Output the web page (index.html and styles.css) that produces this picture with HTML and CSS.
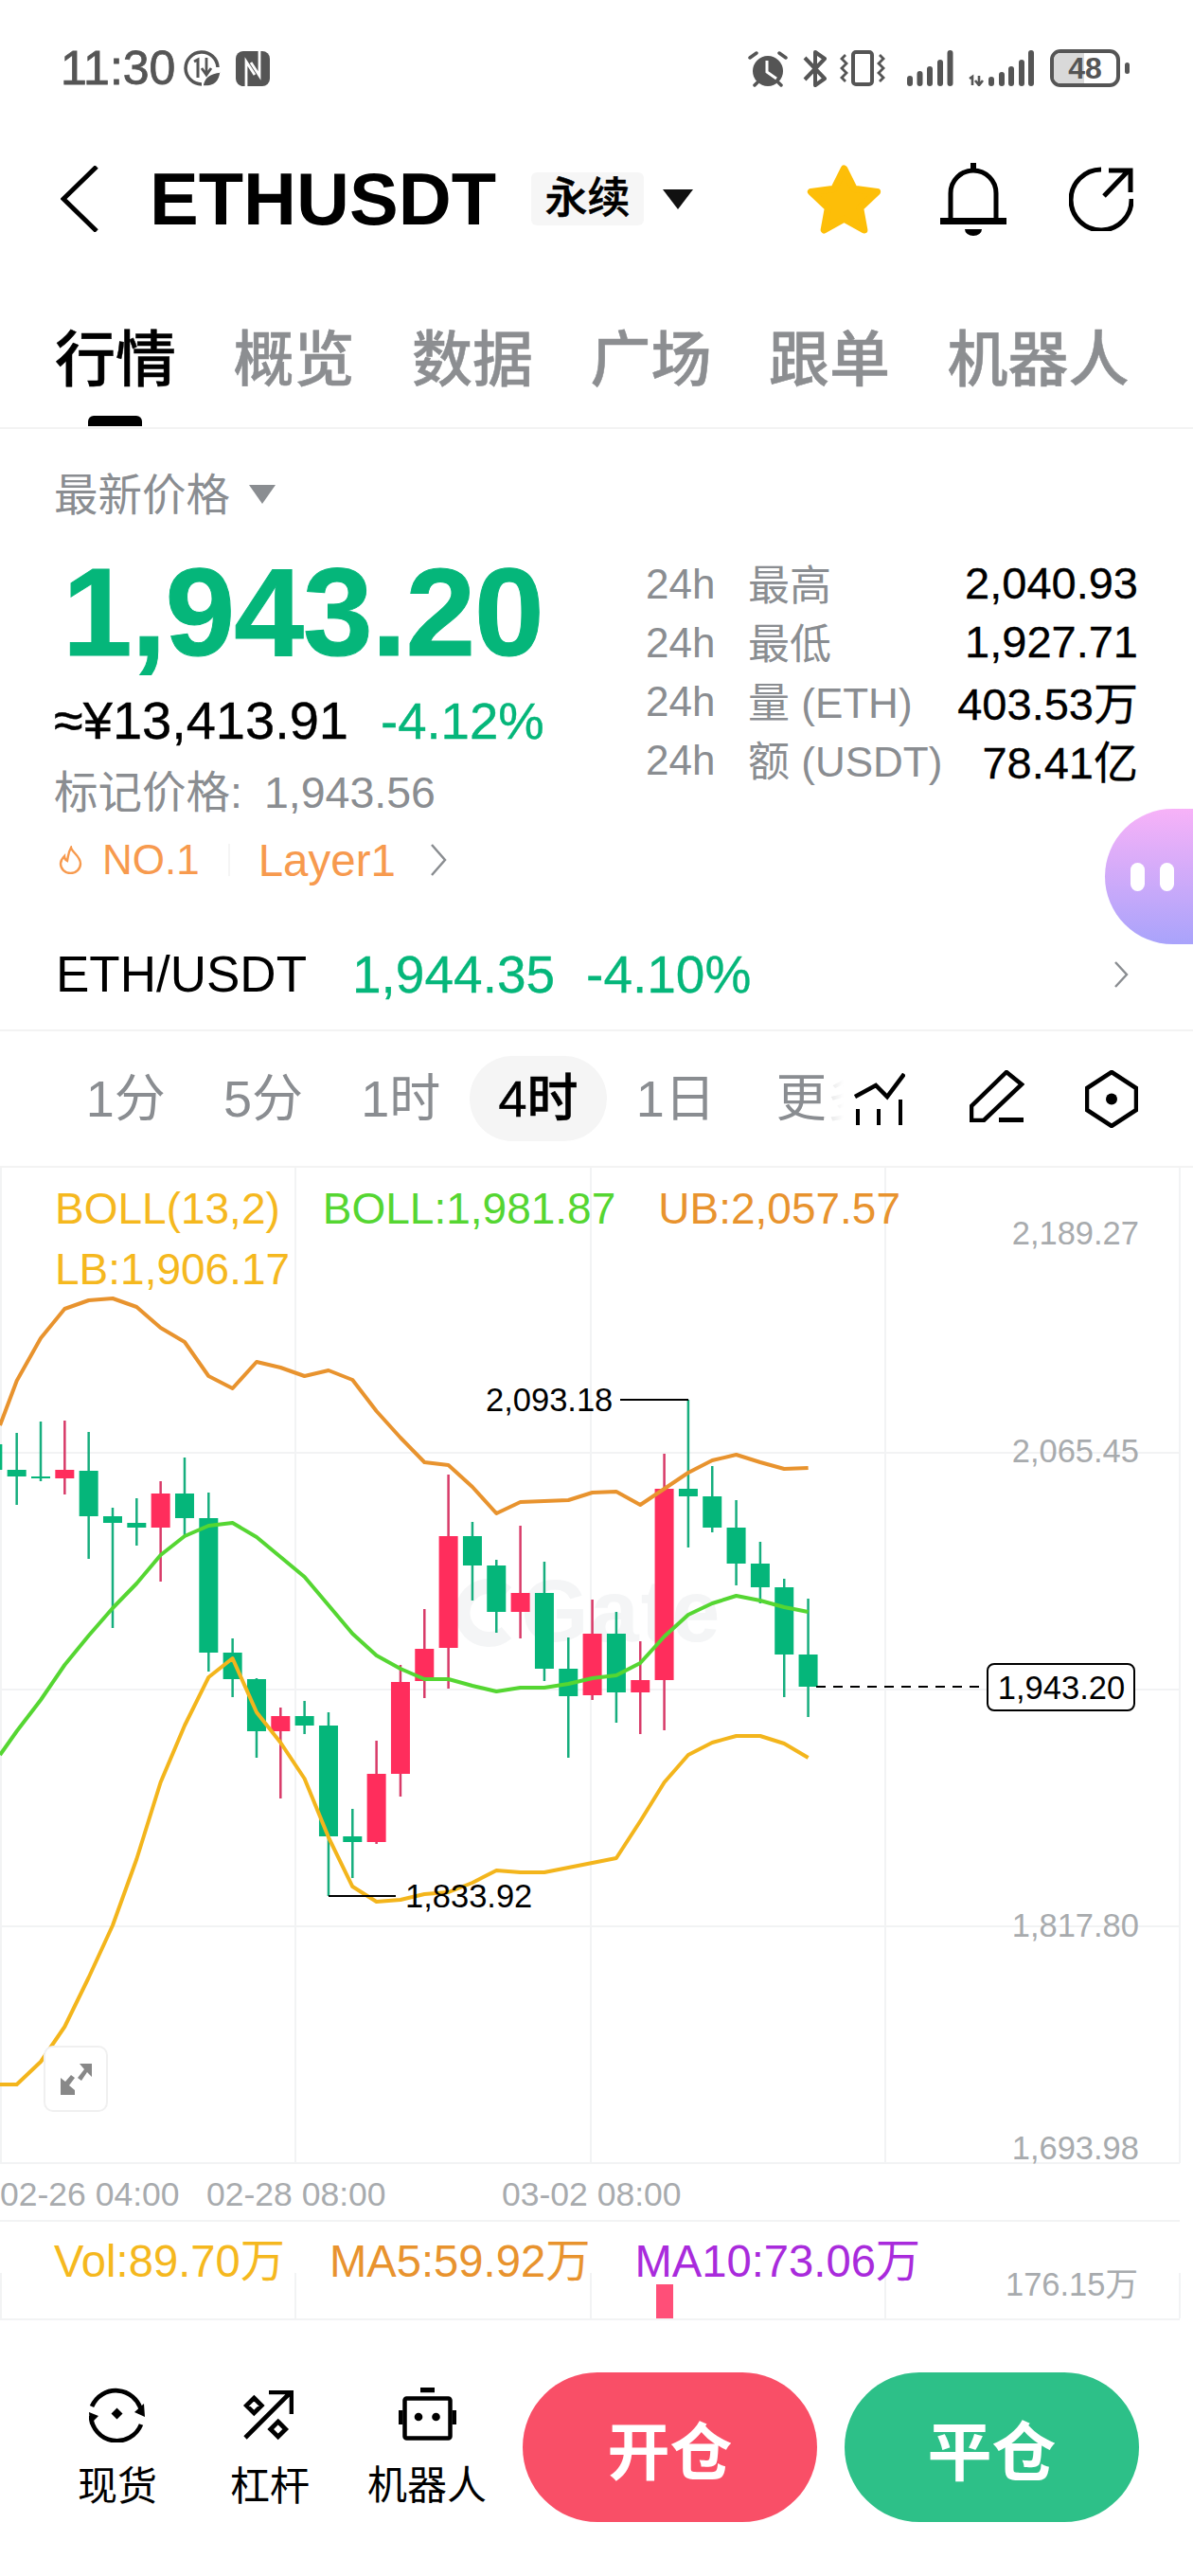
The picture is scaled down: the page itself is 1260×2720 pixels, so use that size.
FILE: index.html
```html
<!DOCTYPE html>
<html lang="zh-CN">
<head>
    <meta charset="UTF-8">
    <meta name="viewport" content="width=device-width, initial-scale=1.0">
    <title>ETHUSDT 永续</title>
    <link rel="stylesheet" href="styles.css">
</head>
<body>

    <!-- Status bar -->
    <div class="status-bar">
        <span class="clock">11:30</span>
        <svg class="st-hd" viewBox="0 0 39 39"><path d="M19 36A17 17 0 1 1 36 18" fill="none" stroke="#555" stroke-width="3.500"/><path d="M20 38c1-9 8-14 19-15-1 10-7 16-19 15z" fill="#555" stroke="#fff" stroke-width="1.500"/><path d="M11 12l4-2v19" fill="none" stroke="#555" stroke-width="3"/><path d="M24 8v17m-5-6l5 7 5-7" fill="none" stroke="#555" stroke-width="2.800"/></svg>
        <svg class="st-nfc" viewBox="0 0 36 37"><rect width="36" height="37" rx="8" fill="#555"/><path d="M11 37V11l9 14M25 0v26l-9-14" fill="none" stroke="#fff" stroke-width="2.800"/></svg>
        <div class="status-right">
            <svg class="st-alarm" viewBox="0 0 42 39"><circle cx="21" cy="22" r="16" fill="#555"/><path d="M20 11v12l10 7" fill="none" stroke="#fff" stroke-width="3"/><path d="M2 8l7-5M40 8l-7-5M7 37l3-3M35 37l-3-3" stroke="#555" stroke-width="3.500" stroke-linecap="round"/></svg>
            <svg class="st-bt" viewBox="0 0 26 39"><path d="M3 8l21 22-10 7V2l10 7L3 31" fill="none" stroke="#555" stroke-width="4" stroke-linejoin="round"/></svg>
            <svg class="st-vib" viewBox="0 0 48 38"><rect x="14" y="2" width="20" height="34" rx="3" fill="none" stroke="#555" stroke-width="4"/><path d="M6 5L2 9l5 5-5 5 5 5-5 5 4 4M42 5l4 4-5 5 5 5-5 5 5 5-4 4" fill="none" stroke="#555" stroke-width="2.800"/></svg>
            <svg class="st-sig" viewBox="0 0 49 38"><path d="M3 30v5M13.500 25v10M24 20v15M35 13v22M45.500 3v32" stroke="#555" stroke-width="6" stroke-linecap="round"/></svg>
            <svg class="st-sig2" viewBox="0 0 70 38"><path d="M1 30l3-2v9M11 27v9m-4-4l4 5 4-5" fill="none" stroke="#555" stroke-width="2.600"/><path d="M24 31v4M35 26v9M45 20v15M56 13v22M66 3v32" stroke="#555" stroke-width="6" stroke-linecap="round"/></svg>
            <div class="battery"><span class="battery-fill"></span><span class="battery-num">48</span></div>
            <span class="battery-nub"></span>
        </div>
    </div>

    <!-- Symbol header -->
    <div class="nav">
        <svg class="back" viewBox="0 0 40 70"><path d="M38 1L3 35l35 34" fill="none" stroke="#000" stroke-width="5"/></svg>
        <h1 class="symbol">ETHUSDT</h1>
        <span class="symbol-tag">永续</span>
        <span class="caret caret-dark"></span>
        <svg class="ic-star" viewBox="3 2 73 69"><path d="M39.500 6l10 20 23 3-17 16 4 22-20-11-20 11 4-22-17-16 23-3z" fill="#fdbe08" stroke="#fdbe08" stroke-width="7" stroke-linejoin="round"/></svg>
        <svg class="ic-bell" viewBox="0 0 70 77"><path d="M11 60V32a24 24 0 0 1 48 0v28" fill="none" stroke="#000" stroke-width="5"/><path d="M0 58h70v7H0zM32 0h6v9h-6zM26 70h18a9 7 0 0 1-18 0z"/></svg>
        <svg class="ic-share" viewBox="0 0 68 68"><path d="M66 34A32 32 0 1 1 34 3" fill="none" stroke="#000" stroke-width="5"/><path d="M37 31L62 5M42 4h23v23" fill="none" stroke="#000" stroke-width="5"/></svg>
    </div>

    <!-- Section tabs -->
    <div class="tabs">
        <span class="tab tab-active">行情</span>
        <span class="tab">概览</span>
        <span class="tab">数据</span>
        <span class="tab">广场</span>
        <span class="tab">跟单</span>
        <span class="tab">机器人</span>
    </div>

    <!-- Price summary -->
    <div class="quote">
        <div class="quote-main">
            <div class="muted-label">最新价格<span class="caret caret-gray"></span></div>
            <div class="last-price">1,943.20</div>
            <div class="sub-price">≈¥13,413.91<span class="change">-4.12%</span></div>
            <div class="mark-price">标记价格:<span class="mark-value">1,943.56</span></div>
            <div class="hot-row">
                <svg class="flame" viewBox="0 0 25 30"><path d="M13 2c1 5 10 9 10 17a10.500 10 0 0 1-21 0c0-4 2-6 4-8 0 3 1 4 3 5 1-5 1-9 4-14z" fill="none" stroke="#f79a4e" stroke-width="2.400"/></svg>
                <span class="hot-text">NO.1</span>
                <span class="hot-sep"></span>
                <span class="hot-layer">Layer1</span>
                <svg class="hot-more" viewBox="0 0 18 34"><path d="M2 1l14 16L2 33" fill="none" stroke="#8a8d91" stroke-width="2.500"/></svg>
            </div>
        </div>
        <div class="stats">
            <span class="stat-h">24h</span><span class="stat-name">最高</span><span class="stat-val">2,040.93</span>
            <span class="stat-h">24h</span><span class="stat-name">最低</span><span class="stat-val">1,927.71</span>
            <span class="stat-h">24h</span><span class="stat-name">量 (ETH)</span><span class="stat-val">403.53万</span>
            <span class="stat-h">24h</span><span class="stat-name">额 (USDT)</span><span class="stat-val">78.41亿</span>
        </div>
        <div class="assistant"><i></i><i></i></div>
    </div>

    <!-- Spot pair -->
    <div class="pair">
        <span class="pair-name">ETH/USDT</span>
        <span class="pair-price">1,944.35</span>
        <span class="pair-change">-4.10%</span>
        <svg class="pair-more" viewBox="0 0 16 28"><path d="M2 1l12 13L2 27" fill="none" stroke="#8a8d91" stroke-width="2.400"/></svg>
    </div>

    <!-- Interval switcher -->
    <div class="intervals">
        <div class="interval-list">
            <span class="interval">1分</span>
            <span class="interval">5分</span>
            <span class="interval">1时</span>
            <span class="interval interval-active">4时</span>
            <span class="interval">1日</span>
            <span class="interval interval-more">更多</span>
        </div>
        <svg class="ic-indicator" viewBox="0 0 54 55"><path d="M1 24l22-12 12 12L53 0" fill="none" stroke="#000" stroke-width="4.500" transform="translate(0 1)"/><path d="M4 38v17M26 38v17M49 28v27" stroke="#000" stroke-width="4"/></svg>
        <svg class="ic-pencil" viewBox="0 0 58 55"><path d="M39 2l16 13-40 38-13 0v-15z" fill="none" stroke="#000" stroke-width="4.500"/><path d="M31 50h26v5H31z"/></svg>
        <svg class="ic-hex" viewBox="0 0 56 61"><path d="M28 2l26 17v23L28 59 2 42V19z" fill="none" stroke="#000" stroke-width="4.500"/><circle cx="28" cy="30.500" r="6"/></svg>
    </div>

    <!-- Kline chart, drawn by chart.js -->
    <div class="chart">
        <svg id="kline" class="kline" viewBox="0 1233 1260 1217"></svg>
        <div class="legend legend-boll">
            <span class="c-yellow">BOLL(13,2)</span>
            <span class="c-green">BOLL:1,981.87</span>
            <span class="c-orange">UB:2,057.57</span>
            <span class="c-yellow">LB:1,906.17</span>
        </div>
        <div class="legend legend-vol">
            <span class="c-yellow">Vol:89.70万</span>
            <span class="c-orange">MA5:59.92万</span>
            <span class="c-purple">MA10:73.06万</span>
        </div>
        <div class="expand">
            <svg viewBox="0 0 33 33"><path d="M33 0v14l-5-5-6 9-4-3 7-9-5-6zM0 33V15l5 4 6-7 4 3-6 8 6 5v5z" fill="#888"/></svg>
        </div>
    </div>

    <!-- Bottom actions -->
    <div class="footer">
        <div class="tool tool-spot">
            <svg viewBox="0 0 60 60"><path d="M3 22A27.500 27.500 0 0 1 55 26M55 41A27.500 27.500 0 0 1 2 32" fill="none" stroke="#000" stroke-width="4.700"/><path d="M58 19l1 14-11-5zM0 28l10 4-9 9zM29.500 23.500l6 6-6 6-6-6z"/></svg>
            <span>现货</span>
        </div>
        <div class="tool tool-margin">
            <svg viewBox="0 0 54 54"><path d="M3 50L50 3M28 2h24v23" fill="none" stroke="#000" stroke-width="4.700"/><path d="M12.300 8l8 8-8 8-8-8zM37.700 33l8 8-8 8-8-8z" fill="none" stroke="#000" stroke-width="4.700"/></svg>
            <span>杠杆</span>
        </div>
        <div class="tool tool-bot">
            <svg viewBox="0 0 61 56"><path d="M23 0h15v5.300H23zM0 24h4.500v15H0zM56.500 24H61v15h-4.500z"/><rect x="6.500" y="11.500" width="48" height="42" rx="2" fill="none" stroke="#000" stroke-width="4.500"/><circle cx="21" cy="31" r="4.300"/><circle cx="39.500" cy="31" r="4.300"/></svg>
            <span>机器人</span>
        </div>
        <button class="trade trade-open">开仓</button>
        <button class="trade trade-close">平仓</button>
    </div>

    <script src="chart.js"></script>
</body>
</html>
```

FILE: styles.css
```css
* {
    box-sizing: border-box;
}

body {
    margin: 0;
    width: 1260px;
    height: 2720px;
    overflow: hidden;
    background: #fff;
    color: #000;
    font-family: "Liberation Sans", "Noto Sans CJK SC", sans-serif;
}

/* status bar */
.status-bar {
    display: flex;
    align-items: center;
    height: 144px;
    padding: 0 67px 0 64px;
}

.clock {
    font-size: 50px;
    font-weight: 500;
    color: #555;
    -webkit-text-stroke: 0.8px #555;
}

.st-hd { width: 39px; height: 39px; margin-left: 9px; }
.st-nfc { width: 36px; height: 37px; margin-left: 16px; }

.status-right {
    display: flex;
    align-items: center;
    margin-left: auto;
}

.st-alarm { width: 42px; height: 39px; }
.st-bt { width: 26px; height: 39px; margin-left: 15px; }
.st-vib { width: 48px; height: 38px; margin-left: 14px; }
.st-sig { width: 49px; height: 38px; margin-left: 23px; }
.st-sig2 { width: 70px; height: 38px; margin-left: 16px; }

.battery {
    position: relative;
    width: 74px;
    height: 40px;
    margin-left: 16px;
    border: 4px solid #555;
    border-radius: 11px;
    overflow: hidden;
    text-align: center;
}

.battery-fill {
    position: absolute;
    left: 0;
    top: 0;
    bottom: 0;
    width: 48%;
    background: #d9d9d9;
}

.battery-num {
    position: relative;
    display: block;
    font-size: 32px;
    font-weight: 700;
    line-height: 32px;
    color: #555;
}

.battery-nub {
    width: 5px;
    height: 12px;
    margin-left: 5px;
    border-radius: 3px;
    background: #555;
}

/* header row */
.nav {
    display: flex;
    align-items: center;
    height: 132px;
    padding-left: 64px;
}

.back { width: 40px; height: 70px; }

.symbol {
    margin: 0 0 0 54px;
    font-size: 77.500px;
    font-weight: 700;
    line-height: 90px;
}

.symbol-tag {
    width: 119px;
    height: 56px;
    margin-left: 37px;
    border-radius: 6px;
    background: #f6f6f6;
    font-size: 45px;
    font-weight: 500;
    line-height: 56px;
    text-align: center;
    -webkit-text-stroke: 0.5px #000;
}

.caret {
    display: inline-block;
    width: 0;
    height: 0;
    border-style: solid;
    border-color: transparent;
    border-bottom-width: 0;
}

.caret-dark {
    margin: 0 0 0 20px;
    border-width: 21px 16px 0;
    border-top-color: #111;
}

.ic-star { width: 79px; height: 73px; margin-left: 120px; }
.ic-bell { width: 70px; height: 77px; margin-left: 62px; }
.ic-share { width: 68px; height: 68px; margin-left: 66px; }

/* section tabs */
.tabs {
    display: flex;
    gap: 60.500px;
    height: 177px;
    padding: 68px 0 0 58px;
    border-bottom: 2px solid #f3f3f3;
}

.tab {
    position: relative;
    font-size: 64px;
    font-weight: 500;
    line-height: 72px;
    height: 72px;
    color: #8c8e91;
    -webkit-text-stroke: 0.5px #8c8e91;
}

.tab-active {
    color: #000;
    -webkit-text-stroke: 0.5px #000;
}

.tab-active::after {
    content: "";
    position: absolute;
    left: 35px;
    top: 95px;
    width: 57px;
    height: 11px;
    border-radius: 6px 6px 0 0;
    background: #000;
}

/* price block */
.quote {
    position: relative;
    display: flex;
    height: 517px;
}

.quote-main {
    width: 682px;
    padding-left: 57px;
}

.muted-label {
    display: flex;
    align-items: center;
    height: 56px;
    margin-top: 37px;
    font-size: 46.500px;
    color: #8a8d91;
}

.caret-gray {
    margin: 8px 0 0 20px;
    border-width: 20px 14px 0;
    border-top-color: #8a8d91;
}

.last-price {
    height: 140px;
    margin: 30px 0 0 9px;
    font-size: 132.500px;
    font-weight: 700;
    line-height: 140px;
    letter-spacing: -1px;
    color: #05b67a;
    -webkit-text-stroke: 1px #05b67a;
}

.sub-price {
    height: 64px;
    margin-top: 13px;
    font-size: 56px;
    line-height: 64px;
    -webkit-text-stroke: 0.4px #000;
}

.change {
    margin-left: 34px;
    font-size: 54.500px;
    color: #05b67a;
    -webkit-text-stroke: 0.4px #05b67a;
}

.mark-price {
    height: 56px;
    margin-top: 16px;
    font-size: 46.500px;
    line-height: 56px;
    color: #8a8d91;
}

.mark-value {
    margin-left: 23px;
}

.hot-row {
    display: flex;
    align-items: center;
    height: 56px;
    margin-top: 15px;
    color: #f79a4e;
    font-size: 44px;
}

.flame { width: 25px; height: 30px; margin: 0 21px 0 5px; }

.hot-sep {
    width: 2px;
    height: 34px;
    margin: 0 30px;
    background: #f5f5f5;
}

.hot-layer { font-size: 47.500px; }
.hot-more { width: 18px; height: 34px; margin-left: 36px; }

.stats {
    display: grid;
    grid-template-columns: 109px 1fr auto;
    grid-auto-rows: 62px;
    align-items: center;
    width: 520px;
    height: 248px;
    margin-top: 131px;
}

.stat-h,
.stat-name {
    font-size: 44px;
    color: #8a8d91;
}

.stat-h { padding-top: 3px; }
.stat-name { margin-left: -1px; }

.stat-val {
    font-size: 47px;
    text-align: right;
    -webkit-text-stroke: 0.3px #000;
}

.assistant {
    position: absolute;
    top: 401px;
    left: 1167px;
    display: flex;
    gap: 16px;
    align-items: center;
    width: 130px;
    height: 143px;
    padding-left: 27px;
    border-radius: 72px 0 0 72px;
    background: linear-gradient(#f7b2f8, #a9a3fb);
}

.assistant i {
    width: 15px;
    height: 30px;
    border-radius: 8px;
    background: #fff;
}

/* spot pair row */
.pair {
    display: flex;
    align-items: center;
    height: 119px;
    padding: 0 68px 0 59px;
    border-bottom: 2px solid #f3f3f3;
    font-size: 53px;
}

.pair-price {
    margin-left: 48px;
    font-size: 55px;
    color: #05b67a;
    -webkit-text-stroke: 0.3px #05b67a;
}

.pair-change {
    margin-left: 33px;
    font-size: 55px;
    color: #05b67a;
    -webkit-text-stroke: 0.3px #05b67a;
}

.pair-more { width: 16px; height: 28px; margin-left: auto; }

/* interval switcher */
.intervals {
    display: flex;
    align-items: center;
    height: 144px;
    padding-left: 60px;
    border-bottom: 2px solid #f3f3f3;
}

.interval-list {
    position: relative;
    display: flex;
    align-items: center;
    width: 840px;
    height: 90px;
    overflow: hidden;
    flex-shrink: 0;
}

.interval-list::after {
    content: "";
    position: absolute;
    right: 0;
    top: 0;
    bottom: 0;
    width: 30px;
    background: linear-gradient(to right, rgba(255, 255, 255, 0.7), #fff 70%);
}

.interval {
    flex: 0 0 145.300px;
    height: 90px;
    border-radius: 45px;
    font-size: 54px;
    line-height: 90px;
    text-align: center;
    color: #8a8d91;
}

.interval-more {
    flex: none;
    margin-left: 33px;
    white-space: nowrap;
    text-align: left;
}

.interval-active {
    background: #f5f5f5;
    color: #000;
    font-weight: 500;
    -webkit-text-stroke: 0.5px #000;
}

.ic-indicator { width: 54px; height: 55px; margin-left: 2px; }
.ic-pencil { width: 58px; height: 55px; margin-left: 68px; margin-top: -6px; }
.ic-hex { width: 56px; height: 61px; margin-left: 64px; }

/* kline chart */
.chart {
    position: relative;
    height: 1217px;
}

.kline {
    display: block;
    width: 1260px;
    height: 1217px;
}

.legend {
    position: absolute;
    display: flex;
    flex-wrap: wrap;
    line-height: 64px;
}

.legend-boll {
    left: 58px;
    top: 11px;
    width: 910px;
    column-gap: 45px;
    font-size: 46px;
}

.legend-vol {
    left: 57px;
    top: 1123px;
    column-gap: 47px;
    font-size: 47.200px;
}

.c-yellow { color: #f5b81e; }
.c-green { color: #55d632; }
.c-orange { color: #e8932e; }
.c-purple { color: #a92bdc; }

.expand {
    position: absolute;
    left: 46px;
    top: 927px;
    display: flex;
    align-items: center;
    justify-content: center;
    width: 68px;
    height: 70px;
    border: 2px solid #f0f0f0;
    border-radius: 10px;
    background: #fff;
}

.expand svg { width: 33px; height: 33px; }

.grid-line { stroke: #f2f3f4; stroke-width: 2; }
.watermark { fill: #f4f5f6; font-size: 92px; font-weight: 700; letter-spacing: 2px; }
.wick-up { stroke: #d83a68; stroke-width: 2.500; }
.wick-down { stroke: #16ae7e; stroke-width: 2.500; }
.body-up { fill: #ff2d5c; }
.body-down { fill: #05b67a; }
.band { fill: none; stroke-width: 4; stroke-linejoin: round; }
.band-ub { stroke: #e8932e; }
.band-mid { stroke: #55d632; }
.band-lb { stroke: #f3b51c; }
.axis-text { fill: #a8abae; font-size: 34.500px; }
.time-text { fill: #a8abae; font-size: 35.500px; }
.mark-text { fill: #000; font-size: 34.500px; }
.mark-line { stroke: #000; stroke-width: 2; fill: none; }
.last-line { stroke: #000; stroke-width: 2; stroke-dasharray: 10 8; }
.last-box { fill: #fff; stroke: #000; stroke-width: 2; }
.vol-bar { fill: #ff4f78; }

/* bottom actions */
.footer {
    display: flex;
    align-items: flex-start;
    padding: 55px 0 0 44px;
}

.tool {
    display: flex;
    flex-direction: column;
    align-items: center;
    height: 150px;
    font-size: 42px;
}

.tool span {
    line-height: 46px;
}

.tool-spot { width: 160px; padding-top: 14px; }
.tool-margin { width: 162px; padding-top: 19px; }
.tool-bot { width: 170px; padding-top: 16px; }
.tool-spot svg { width: 60px; height: 60px; margin-bottom: 24px; }
.tool-margin svg { width: 54px; height: 54px; margin: 0 4px 25px 0; }
.tool-bot svg { width: 61px; height: 56px; margin-bottom: 25px; }

.trade {
    width: 311px;
    height: 158px;
    border: none;
    border-radius: 79px;
    color: #fff;
    font-family: inherit;
    font-size: 66px;
    font-weight: 700;
}

.trade-open {
    margin-left: 16px;
    background: #f94f67;
}

.trade-close {
    margin-left: 29px;
    font-size: 68px;
    background: #2dc088;
}
```

FILE: chart.js
```js
const NS = 'http://www.w3.org/2000/svg';
const svg = document.getElementById('kline');

function add(tag, attrs, text) {
    const el = document.createElementNS(NS, tag);
    for (const key in attrs) el.setAttribute(key, attrs[key]);
    if (text) el.textContent = text;
    svg.appendChild(el);
    return el;
}

const STEP = 25.33;
const X0 = 17.67;
const BODY = 20;
const xAt = i => X0 + STEP * i;

// [wick top, body top, body bottom, wick bottom, up?] in chart pixels, oldest first
const candles = [
    [1500, 1525, 1552, 1590, 0],
    [1513, 1552, 1559, 1589, 0],
    [1501, 1559, 1561, 1564, 0],
    [1500, 1552, 1561, 1578, 1],
    [1512, 1553, 1601, 1646, 0],
    [1592, 1601, 1608, 1719, 0],
    [1582, 1608, 1613, 1632, 0],
    [1564, 1577, 1613, 1670, 1],
    [1539, 1577, 1603, 1622, 0],
    [1576, 1603, 1745, 1765, 0],
    [1730, 1745, 1773, 1792, 0],
    [1772, 1773, 1828, 1856, 0],
    [1803, 1812, 1828, 1899, 1],
    [1796, 1812, 1822, 1831, 0],
    [1808, 1822, 1939, 2002, 0],
    [1910, 1939, 1945, 1983, 0],
    [1838, 1873, 1945, 1947, 1],
    [1758, 1776, 1873, 1897, 1],
    [1699, 1741, 1775, 1793, 1],
    [1557, 1622, 1740, 1783, 1],
    [1607, 1622, 1653, 1690, 0],
    [1647, 1653, 1702, 1724, 0],
    [1611, 1682, 1702, 1730, 1],
    [1649, 1682, 1762, 1775, 0],
    [1729, 1762, 1791, 1856, 0],
    [1689, 1725, 1790, 1795, 1],
    [1702, 1725, 1787, 1819, 0],
    [1733, 1774, 1787, 1831, 1],
    [1535, 1572, 1774, 1827, 1],
    [1478, 1572, 1580, 1634, 0],
    [1548, 1580, 1613, 1618, 0],
    [1584, 1613, 1651, 1674, 0],
    [1628, 1651, 1676, 1693, 0],
    [1667, 1676, 1747, 1792, 0],
    [1688, 1747, 1781, 1813, 0]
];

// Bollinger bands, one value per candle starting at index 0
const upper = [1458, 1413, 1382, 1373, 1371, 1380, 1402, 1417, 1453, 1466, 1438, 1444, 1453, 1447, 1457, 1490, 1518, 1544, 1547, 1570, 1598, 1586, 1585, 1584, 1576, 1575, 1589, 1572, 1555, 1542, 1536, 1544, 1551, 1550];
const middle = [1828, 1795, 1758, 1727, 1698, 1672, 1642, 1622, 1611, 1608, 1623, 1644, 1665, 1695, 1725, 1748, 1762, 1773, 1773, 1780, 1786, 1782, 1782, 1778, 1772, 1769, 1756, 1728, 1705, 1693, 1685, 1690, 1697, 1702];
const lower = [2201, 2177, 2140, 2088, 2033, 1963, 1882, 1822, 1771, 1751, 1808, 1840, 1878, 1940, 1992, 2008, 2006, 2000, 1998, 1988, 1975, 1977, 1977, 1972, 1967, 1962, 1923, 1882, 1853, 1840, 1833, 1833, 1841, 1856];

// grid
[1, 312, 624, 935, 1246].forEach(x => {
    add('line', { x1: x, x2: x, y1: 1233, y2: 2284, class: 'grid-line' });
    add('line', { x1: x, x2: x, y1: 2400, y2: 2448, class: 'grid-line' });
});
[1534, 1784, 2034, 2284, 2345, 2449].forEach(y => {
    add('line', { x1: 0, x2: 1246, y1: y, y2: y, class: 'grid-line' });
});

// watermark
add('path', { d: 'M535 1682a28 28 0 1 0 0 42', fill: 'none', stroke: '#f4f5f6', 'stroke-width': 16 });
add('text', { x: 550, y: 1733, class: 'watermark' }, 'Gate');

// candles
candles.forEach((c, n) => {
    const i = n - 1;
    const x = xAt(i);
    const up = c[4] === 1;
    if (i >= 0) {
        add('line', { x1: x, x2: x, y1: c[0], y2: c[3], class: up ? 'wick-up' : 'wick-down' });
    }
    add('rect', { x: x - BODY / 2, y: c[1], width: BODY, height: c[2] - c[1], class: up ? 'body-up' : 'body-down' });
});

function band(values, cls, startY) {
    const pts = values.map((y, i) => `${xAt(i).toFixed(1)},${y}`);
    pts.unshift(`0,${startY}`);
    add('polyline', { points: pts.join(' '), class: `band ${cls}` });
}
band(upper, 'band-ub', 1505);
band(middle, 'band-mid', 1853);
band(lower, 'band-lb', 2201);

// high and low marks
add('text', { x: 513, y: 1490, class: 'mark-text' }, '2,093.18');
add('path', { d: 'M655 1478H727', class: 'mark-line' });
add('text', { x: 428, y: 2014, class: 'mark-text' }, '1,833.92');
add('path', { d: 'M347 2002H418', class: 'mark-line' });

// price axis
[['2,189.27', 1314], ['2,065.45', 1544], ['1,817.80', 2045], ['1,693.98', 2280]].forEach(l => {
    add('text', { x: 1203, y: l[1], 'text-anchor': 'end', class: 'axis-text' }, l[0]);
});
add('text', { x: 1202, y: 2424, 'text-anchor': 'end', class: 'axis-text' }, '176.15万');

// time axis
[['02-26 04:00', 0], ['02-28 08:00', 218], ['03-02 08:00', 530]].forEach(l => {
    add('text', { x: l[1], y: 2329, class: 'time-text' }, l[0]);
});

// last price tag
add('line', { x1: 862, x2: 1040, y1: 1781, y2: 1781, class: 'last-line' });
add('rect', { x: 1043, y: 1757, width: 155, height: 49, rx: 7, class: 'last-box' });
add('text', { x: 1121, y: 1794, 'text-anchor': 'middle', class: 'mark-text' }, '1,943.20');

// volume
add('rect', { x: 693, y: 2412, width: 18, height: 36, class: 'vol-bar' });
```
